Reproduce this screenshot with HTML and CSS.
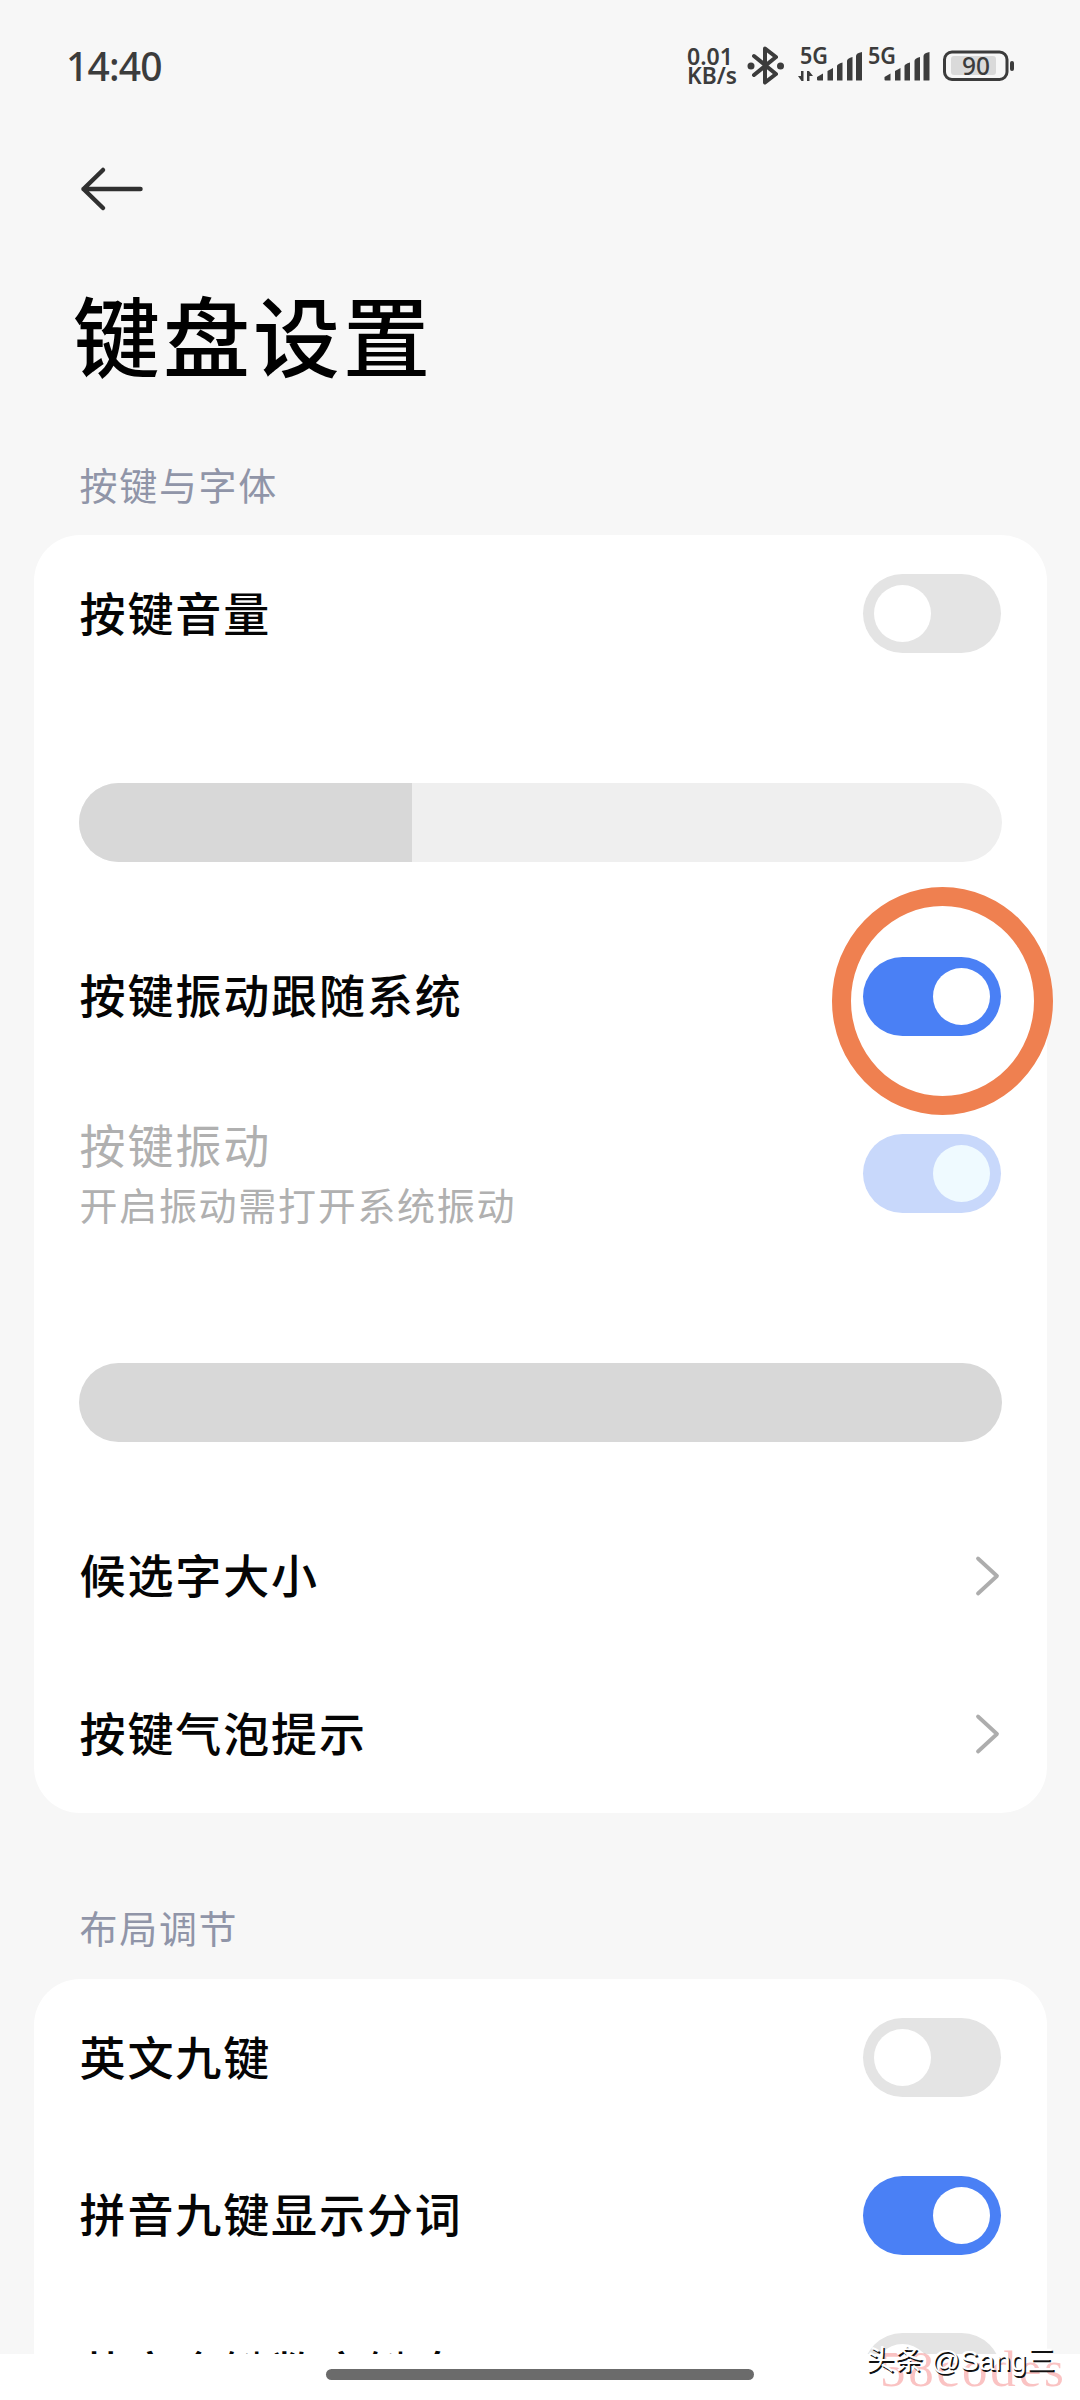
FILE: index.html
```html
<!DOCTYPE html>
<html lang="zh-CN">
<head>
<meta charset="utf-8">
<title>键盘设置</title>
<link rel="stylesheet" href="styles.css">
</head>
<body>
<div class="screen">
  <div class="viewport">
    <header class="status">
      <span class="clock">14:40</span>
      <svg class="status-icons" width="380" height="90" viewBox="0 0 380 90">
        <g class="net-text">
          <text x="27" y="45" textLength="46" lengthAdjust="spacingAndGlyphs">0.01</text>
          <text x="27" y="64" textLength="50" lengthAdjust="spacingAndGlyphs">KB/s</text>
          <text x="140" y="43.500" textLength="28" lengthAdjust="spacingAndGlyphs">5G</text>
          <text x="208" y="43.500" textLength="28" lengthAdjust="spacingAndGlyphs">5G</text>
        </g>
        <path class="line" d="M94 36 L116 54 L105 62.500 V28.500 L116 37 L94 55"/>
        <circle cx="91" cy="46" r="3.500"/><circle cx="120.500" cy="46" r="3.500"/>
        <path d="M143.500 51 V61 H141.500 L138 56 H141 V51 Z M147 61 V51 H149 L153 56 H149.500 V61 Z"/>
        <g id="bars">
          <path d="M157 57 L163 53.500 V60.500 H158 Q157 60.500 157 59.500 Z"/>
          <path d="M167.500 51 L173 48 V60.500 H167.500 Z"/>
          <path d="M177 46 Q177 44 182.500 42.500 V60.500 H177 Z"/>
          <path d="M187 41 Q187 38.500 192.500 37 V60.500 H187 Z"/>
          <path d="M196 36 Q196 33 202 32 V60 Q202 60.500 201 60.500 H196 Z"/>
        </g>
        <use href="#bars" x="67.500"/>
        <rect class="charge" x="291" y="36" width="45" height="19" rx="3"/>
        <rect class="battery" x="284.500" y="32" width="62.500" height="27.500" rx="7.500"/>
        <rect x="350" y="41" width="4" height="10" rx="2"/>
        <text class="percent" x="302" y="54.500" textLength="28" lengthAdjust="spacingAndGlyphs">90</text>
      </svg>
    </header>
    <nav class="nav">
      <svg width="64" height="46" viewBox="0 0 64 46"><path class="back" d="M24 4 L4.500 23 L24 42 M4.500 23 H61.500"/></svg>
    </nav>
    <h1 class="title">键盘设置</h1>
    <h2 class="section">按键与字体</h2>
    <section class="card">
      <div class="row"><span class="label">按键音量</span><span class="switch"></span></div>
      <div class="slider"><div class="fill" style="width:36.1%"></div></div>
      <div class="row"><span class="label">按键振动跟随系统</span><span class="switch on"><span class="ring"></span></span></div>
      <div class="row tall disabled">
        <div class="texts"><span class="label">按键振动</span><span class="hint">开启振动需打开系统振动</span></div>
        <span class="switch on faded"></span>
      </div>
      <div class="slider"><div class="fill" style="width:100%"></div></div>
      <div class="row"><span class="label">候选字大小</span><svg class="chevron" width="26" height="42" viewBox="0 0 26 42"><path d="M3 3.500 L22 21 L3 38.500"/></svg></div>
      <div class="row"><span class="label">按键气泡提示</span><svg class="chevron" width="26" height="42" viewBox="0 0 26 42"><path d="M3 3.500 L22 21 L3 38.500"/></svg></div>
    </section>
    <h2 class="section second">布局调节</h2>
    <section class="card">
      <div class="row"><span class="label">英文九键</span><span class="switch"></span></div>
      <div class="row"><span class="label">拼音九键显示分词</span><span class="switch on"></span></div>
      <div class="row"><span class="label">英文全键数字键盘</span><span class="switch"></span></div>
    </section>
  </div>
  <div class="home"></div>
  <div class="site">58codes</div>
  <div class="credit">头条 @Sang三</div>
</div>
</body>
</html>
```
FILE: styles.css
```css
* { box-sizing: border-box; }
body { margin: 0; background: #fff; font-family: "Noto Sans CJK SC", sans-serif; color: #050505; }
.screen { position: relative; width: 1080px; height: 2400px; overflow: hidden; background: #fff; }
.viewport { height: 2354px; overflow: hidden; background: #f7f7f7; }

.status { display: flex; justify-content: space-between; height: 130px; padding: 20px 40px 0 66px; }
.clock { font: 500 39px/92px "Noto Sans", sans-serif; letter-spacing: -0.8px; color: #3c3c3c; }
.status-icons { fill: #3c3c3c; }
.net-text { font: 600 23px "Noto Sans", sans-serif; }
.line { fill: none; stroke: #3c3c3c; stroke-width: 4; stroke-linejoin: round; stroke-linecap: round; }
.charge { fill: #dadada; }
.battery { fill: none; stroke: #3c3c3c; stroke-width: 3; }
.percent { font: 500 25px "Noto Sans", sans-serif; }

.nav { display: flex; align-items: center; height: 117px; padding-left: 79px; }
.back { fill: none; stroke: #303030; stroke-width: 4.5; stroke-linecap: round; stroke-linejoin: round; }
.title { margin: 0; padding: 26px 0 0 73px; height: 193px; font-size: 87px; line-height: 120px; letter-spacing: 3px; font-weight: 500; color: #000; }
.section { margin: 0; height: 95px; padding: 12px 0 0 79.5px; font-size: 38px; line-height: 64px; letter-spacing: 1.7px; font-weight: 400; color: #9095a8; }
.section.second { height: 166px; padding-top: 82px; }

.card { width: 1013px; margin-left: 34px; padding: 0 45.5px 0 44.5px; border-radius: 46px; background: #fff; }
.row { display: flex; align-items: center; justify-content: space-between; height: 157.7px; }
.row.tall { height: 198px; }
.label { font-size: 46px; line-height: 66px; letter-spacing: 1.9px; font-weight: 500; padding: 0 0 6px 1px; }
.texts { display: flex; flex-direction: column; padding-bottom: 1px; }
.disabled { color: #b0b0b0; }
.disabled .label { line-height: 62px; padding-bottom: 0; margin: -3px 0 2px; font-weight: 400; }
.hint { padding-left: 1px; font-size: 38px; line-height: 56px; letter-spacing: 1.7px; font-weight: 400; }

.switch { position: relative; display: flex; align-items: center; width: 137.5px; height: 79px; margin-right: 1px; padding: 0 10.5px; border-radius: 40px; background: #e4e4e4; }
.switch::before { content: ""; width: 57px; height: 57px; border-radius: 50%; background: #fff; }
.switch.on { justify-content: flex-end; background: #4a80f5; }
.switch.faded { background: #c8d8fb; }
.switch.faded::before { background: #effaff; }
.ring { position: absolute; left: -31px; top: -70px; width: 221px; height: 228px; border: 19px solid #ef8050; border-radius: 50%; }

.slider { height: 78.5px; margin: 90.5px 0 55.5px; border-radius: 40px; background: #efefef; overflow: hidden; }
.fill { height: 100%; background: #d8d8d8; }
.chevron { margin-right: 1px; fill: none; stroke: #adadad; stroke-width: 3.8; stroke-linecap: round; stroke-linejoin: round; }

.home { position: absolute; left: 326px; top: 2369px; width: 428px; height: 11px; border-radius: 6px; background: #6b6b6b; }
.site { position: absolute; left: 880px; top: 2340px; font: 51px/58px "Liberation Serif", serif; letter-spacing: 2.8px; color: rgba(240, 90, 90, 0.36); }
.credit { position: absolute; left: 866px; top: 2340px; font: 400 28.5px/40px "Liberation Sans", "Noto Sans CJK SC", sans-serif; white-space: nowrap; color: #fff; text-shadow: 1.5px 1.5px 0 #111; }
```
